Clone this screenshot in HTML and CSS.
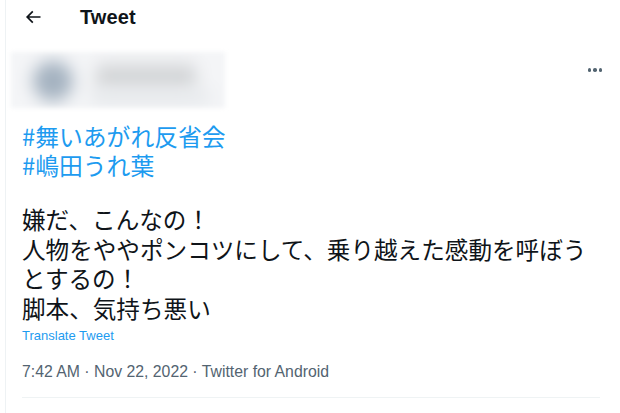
FILE: index.html
```html
<!DOCTYPE html>
<html lang="ja">
<head>
<meta charset="utf-8">
<link rel="stylesheet" href="styles.css">
</head>
<body>
<div class="page">
  <header class="topbar">
    <svg class="back" viewBox="0 0 24 24" width="20" height="20"><path d="M7.414 13l5.043 5.04-1.414 1.42L3.586 12l7.457-7.46 1.414 1.42L7.414 11H21v2H7.414z" fill="#0f1419"/></svg>
    <h1 class="title">Tweet</h1>
  </header>
  <div class="user-row">
    <div class="blurbox">
      <div class="blob avatar"></div>
      <div class="blob name"></div>
      <div class="blob name2"></div>
    </div>
    <div class="more"><span></span><span></span><span></span></div>
  </div>
  <div class="tags">
    <div>#舞いあがれ反省会</div>
    <div>#嶋田うれ葉</div>
  </div>
  <div class="body">
    <div>嫌だ、こんなの！</div>
    <div>人物をややポンコツにして、乗り越えた感動を呼ぼう</div>
    <div>とするの！</div>
    <div>脚本、気持ち悪い</div>
  </div>
  <div class="translate">Translate Tweet</div>
  <div class="meta">7:42 AM · Nov 22, 2022 · Twitter for Android</div>
  <div class="divider"></div>
</div>
</body>
</html>
```
FILE: styles.css
```css
html, body { margin: 0; padding: 0; background: #fff; }
body { width: 620px; height: 413px; overflow: hidden; font-family: "Liberation Sans", "Noto Sans CJK JP", sans-serif; color: #0f1419; }
.page { margin-left: 5px; border-left: 1px solid #eef2f4; height: 413px; padding-left: 16px; padding-right: 20px; box-sizing: border-box; }
.topbar { display: flex; align-items: center; height: 34px; }
.back { margin-left: 1px; margin-top: -1px; }
.title { margin: 0 0 0 37px; font-size: 20px; font-weight: bold; letter-spacing: 0.1px; }
.user-row { display: flex; justify-content: space-between; margin-top: 18px; height: 57px; margin-left: -11px; }
.blurbox { position: relative; width: 214px; height: 56px; background: #f4f5f7; filter: blur(2px); overflow: hidden; }
.blob { position: absolute; filter: blur(8px); }
.avatar { left: 22px; top: 9px; width: 40px; height: 40px; border-radius: 50%; background: #a4b2c0; }
.name { left: 85px; top: 12px; width: 100px; height: 26px; background: #d4d6d8; border-radius: 6px; }
.name2 { left: 80px; top: 38px; width: 120px; height: 14px; background: #e6e9ec; border-radius: 6px; }
.more { display: flex; gap: 2px; align-items: center; height: 22px; margin-top: 7px; margin-right: -2px; }
.more span { width: 3.5px; height: 3.5px; border-radius: 50%; background: #536471; }
.tags { margin-top: 12px; font-family: "Noto Sans CJK JP", sans-serif; font-size: 23.8px; line-height: 29px; color: #1d9bf0; font-weight: 400; }
.body { margin-top: 26px; font-family: "Noto Sans CJK JP", sans-serif; font-size: 23.6px; line-height: 29.5px; color: #0f1419; }
.translate { margin-top: 4px; font-size: 13px; color: #1d9bf0; line-height: 18px; }
.meta { margin-top: 17px; font-size: 15.8px; color: #536471; line-height: 20px; }
.divider { margin-top: 15px; border-top: 1px solid #eff3f4; }
```
